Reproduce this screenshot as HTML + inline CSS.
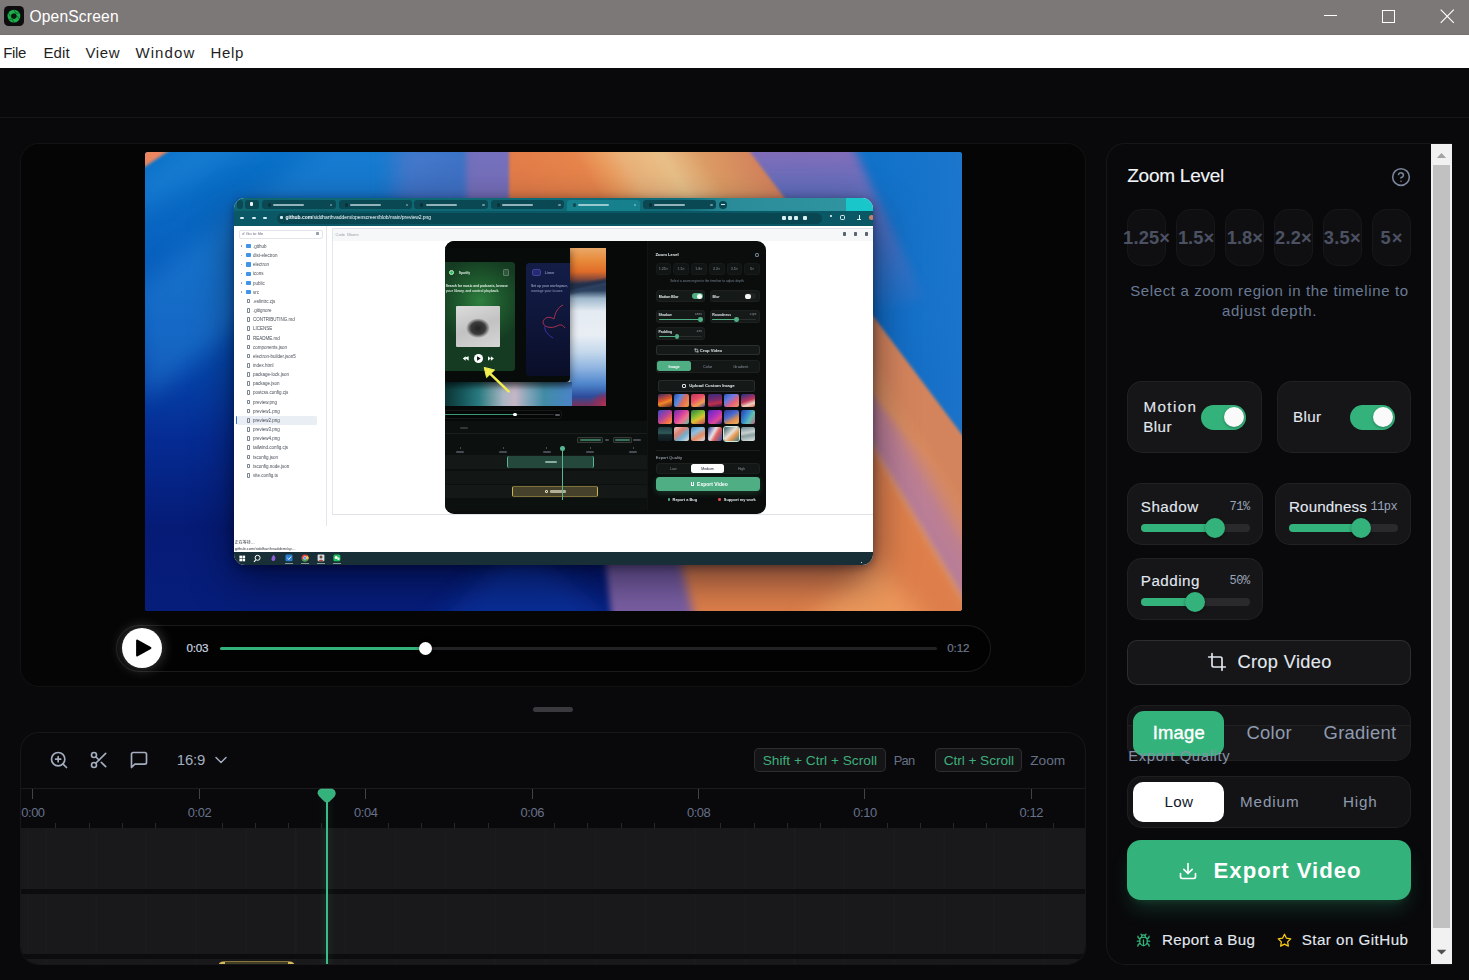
<!DOCTYPE html>
<html lang="en"><head><meta charset="utf-8"><title>OpenScreen</title>
<style>
html,body{margin:0;padding:0}
body{width:1469px;height:980px;overflow:hidden;position:relative;background:#09090b;font-family:"Liberation Sans",sans-serif}
div,span.t,svg{position:absolute;box-sizing:border-box}
.t{white-space:pre;line-height:1}
svg{overflow:visible}
</style></head><body>
<!-- window chrome -->
<div style="left:0px;top:0px;width:1469px;height:35px;background:#7c7877;border-bottom:1px solid #747070"></div>
<svg style="left:4px;top:6px" width="20" height="20" viewBox="0 0 20 20"><rect width="20" height="20" rx="4.6" fill="#0d0d0f"/><circle cx="9.9" cy="10.1" r="4.55" fill="none" stroke="#1fae4c" stroke-width="3.7"/><g stroke="#0f6a2c" stroke-width="0.9"><path d="M9.9 3.8l2 3.6M15.4 7l-4.1.1M15.4 13.3l-2.2-3.5M9.9 16.4l-2-3.6M4.4 13.3l4.1-.1M4.4 7l2.2 3.5"/></g><path d="M9.9 7.5l2.25 1.3v2.6l-2.25 1.3l-2.25-1.3v-2.6z" fill="#0a1c10"/></svg>
<span class="t" style="left:29.4px;top:9.3px;font-size:15.6px;color:#ffffff;letter-spacing:0.18px;">OpenScreen</span>
<div style="left:1324px;top:15px;width:12.5px;height:1px;background:#fff"></div>
<div style="left:1382px;top:10px;width:13px;height:12.5px;border:1px solid #fff"></div>
<svg style="left:1438px;top:7px" width="18" height="18" viewBox="0 0 18 18"><path d="M2.7 2.7L15.8 15.8M15.8 2.7L2.7 15.8" stroke="#fff" stroke-width="1.15" fill="none"/></svg>
<div style="left:0px;top:35px;width:1469px;height:33px;background:#ffffff"></div>
<span class="t" style="left:3.3px;top:45.4px;font-size:15px;color:#1f1f1f;letter-spacing:-0.36px;">File</span>
<span class="t" style="left:43.4px;top:45.4px;font-size:15px;color:#1f1f1f;letter-spacing:0.11px;">Edit</span>
<span class="t" style="left:85.5px;top:45.4px;font-size:15px;color:#1f1f1f;letter-spacing:0.58px;">View</span>
<span class="t" style="left:135.4px;top:45.4px;font-size:15px;color:#1f1f1f;letter-spacing:1.11px;">Window</span>
<span class="t" style="left:210.6px;top:45.4px;font-size:15px;color:#1f1f1f;letter-spacing:0.65px;">Help</span>
<div style="left:0px;top:68px;width:1469px;height:49px;background:#09090b"></div>
<div style="left:0px;top:117px;width:1469px;height:1px;background:rgba(255,255,255,.055)"></div>
<!-- preview panel -->
<div style="left:20px;top:143px;width:1066px;height:544px;background:#050506;border:1px solid rgba(255,255,255,.055);border-radius:19px"></div>
<!-- video preview frame -->
<div style="left:145px;top:152px;width:817px;height:458.7px;border-radius:3px;overflow:hidden;background:#0650b4">
<svg style="left:0;top:0" width="817" height="459" viewBox="0 0 817 459"><defs><linearGradient id="wb" x1="0" y1="0" x2="0" y2="1"><stop offset="0" stop-color="#0a72c8"/><stop offset=".18" stop-color="#0864c0"/><stop offset=".4" stop-color="#0650b4"/><stop offset=".62" stop-color="#052c94"/><stop offset=".82" stop-color="#051b76"/><stop offset="1" stop-color="#061d7a"/></linearGradient><linearGradient id="wr" x1="0" y1="0" x2="1" y2="0"><stop offset=".55" stop-color="#0a74cc" stop-opacity="0"/><stop offset=".8" stop-color="#0a6ec6" stop-opacity=".75"/><stop offset="1" stop-color="#1c76cc" stop-opacity=".95"/></linearGradient><linearGradient id="wo" gradientUnits="userSpaceOnUse" x1="364" y1="0" x2="538.1" y2="-107.9"><stop offset="0" stop-color="#e27c48"/><stop offset=".265" stop-color="#e6844c"/><stop offset=".36" stop-color="#ea9a5c"/><stop offset=".456" stop-color="#e9b078"/><stop offset=".63" stop-color="#e8c088"/><stop offset=".797" stop-color="#dc9a64"/><stop offset="1" stop-color="#d4845c"/></linearGradient><linearGradient id="wp" x1="0" y1="0" x2="0" y2="1"><stop offset="0" stop-color="#7470bc"/><stop offset="1" stop-color="#7a5ea2"/></linearGradient><linearGradient id="wv" x1="0" y1="0" x2="0" y2="1"><stop offset="0" stop-color="#8a6cb6" stop-opacity="1"/><stop offset="1" stop-color="#7a70c0" stop-opacity="0"/></linearGradient><linearGradient id="wk" gradientUnits="userSpaceOnUse" x1="728" y1="293" x2="768" y2="269.4"><stop offset="0" stop-color="#b47a9c" stop-opacity=".97"/><stop offset=".5" stop-color="#ba7d96" stop-opacity=".9"/><stop offset="1" stop-color="#d08070" stop-opacity="0"/></linearGradient><filter id="b2" x="-20%" y="-20%" width="140%" height="140%"><feGaussianBlur stdDeviation="1.6"/></filter><filter id="b3" x="-20%" y="-20%" width="140%" height="140%"><feGaussianBlur stdDeviation="3"/></filter><filter id="b5" x="-20%" y="-20%" width="140%" height="140%"><feGaussianBlur stdDeviation="5"/></filter><filter id="b10" x="-30%" y="-30%" width="160%" height="160%"><feGaussianBlur stdDeviation="11"/></filter></defs><rect width="817" height="459" fill="url(#wb)"/><rect width="817" height="300" fill="url(#wr)"/><polygon points="185,-12 325,-12 0,248 -10,138" fill="#2d8fe0" opacity=".38" filter="url(#b10)"/><polygon points="55,-12 115,-12 -10,63 -10,28" fill="#2f93e4" opacity=".35" filter="url(#b10)"/><polygon points="275,488 375,388 495,488" fill="#0a3cb0" opacity=".5" filter="url(#b10)"/><polygon points="250,-12 335,-12 335,58 415,248 355,248 250,58" fill="#6c74c4" opacity=".55" filter="url(#b10)"/><polygon points="321,-12 385,-12 385,53 430,178 505,298 571,413 583,470 467,470 461,413 430,298 375,178 321,53" fill="url(#wp)" filter="url(#b3)"/><polygon points="555,-12 705,-12 780,148 685,165" fill="url(#wv)" filter="url(#b5)"/><polygon points="364,-12 596,-12 830,300 830,470 579,470 571,413 503,298 420,178 364,53" fill="url(#wo)" filter="url(#b2)"/><polygon points="615,100 728,293 830,465 830,488 555,488 495,248" fill="#de7f4c" filter="url(#b5)"/><polygon points="645,488 728,404 795,488" fill="#f6a868" opacity=".6" filter="url(#b10)"/><polygon points="615,100 728,244 830,364 830,465 728,293" fill="url(#wk)" filter="url(#b3)"/><polygon points="-5,-6 31,-6 -5,18" fill="#ea8660" filter="url(#b2)"/></svg>
<div style="left:89px;top:46px;width:639px;height:367px;border-radius:11px;box-shadow:0 14px 40px rgba(0,0,20,.55),0 2px 10px rgba(0,0,20,.4)"></div>
<div style="left:89px;top:46px;width:639px;height:367px;border-radius:11px;overflow:hidden;background:#ffffff"><div style="left:0;top:0;width:639px;height:367px;filter:blur(.3px)">
<div style="left:0px;top:0px;width:639px;height:13px;background:linear-gradient(90deg,#0e6671 0%,#0f6c78 70%,#2a8c98 78%,#2f94a0 95%)"></div>
<div style="left:611.8px;top:0px;width:28px;height:13px;background:#19c6ca"></div>
<div style="left:2.5px;top:2.2px;width:6px;height:8.6px;background:#0a4853;border-radius:3px"></div>
<div style="left:10.5px;top:2.2px;width:14px;height:8.6px;background:#0a4853;border-radius:3px"></div>
<div style="left:16px;top:4px;width:3px;height:4px;background:#e8f4f6;border-radius:1px"></div>
<div style="left:27.5px;top:2.2px;width:74.1px;height:9.2px;background:#0a4954;border-radius:3.2px"></div>
<div style="left:33.5px;top:5.4px;width:3.2px;height:3.2px;background:#0c3038;border-radius:50%"></div>
<div style="left:39px;top:6px;width:31.12px;height:2px;background:rgba(230,245,248,.62);border-radius:1px"></div>
<div style="left:95.6px;top:5.6px;width:2.6px;height:2.6px;background:rgba(230,245,248,.45);border-radius:1px"></div>
<div style="left:104.6px;top:2.2px;width:73px;height:9.2px;background:#0a4954;border-radius:3.2px"></div>
<div style="left:110.6px;top:5.4px;width:3.2px;height:3.2px;background:#0c3038;border-radius:50%"></div>
<div style="left:116.1px;top:6px;width:30.66px;height:2px;background:rgba(230,245,248,.62);border-radius:1px"></div>
<div style="left:171.6px;top:5.6px;width:2.6px;height:2.6px;background:rgba(230,245,248,.45);border-radius:1px"></div>
<div style="left:180.3px;top:2.2px;width:74.1px;height:9.2px;background:#0a4954;border-radius:3.2px"></div>
<div style="left:186.3px;top:5.4px;width:3.2px;height:3.2px;background:#0c3038;border-radius:50%"></div>
<div style="left:191.8px;top:6px;width:31.12px;height:2px;background:rgba(230,245,248,.62);border-radius:1px"></div>
<div style="left:248.4px;top:5.6px;width:2.6px;height:2.6px;background:rgba(230,245,248,.45);border-radius:1px"></div>
<div style="left:256.6px;top:2.2px;width:73.4px;height:9.2px;background:#0a4954;border-radius:3.2px"></div>
<div style="left:262.6px;top:5.4px;width:3.2px;height:3.2px;background:#0c3038;border-radius:50%"></div>
<div style="left:268.1px;top:6px;width:30.83px;height:2px;background:rgba(230,245,248,.62);border-radius:1px"></div>
<div style="left:324px;top:5.6px;width:2.6px;height:2.6px;background:rgba(230,245,248,.45);border-radius:1px"></div>
<div style="left:332.7px;top:2.2px;width:73.1px;height:10.8px;background:#16808d;border-radius:3.2px 3.2px 0 0"></div>
<div style="left:338.7px;top:5.4px;width:3.2px;height:3.2px;background:#0d4c56;border-radius:50%"></div>
<div style="left:344.2px;top:6px;width:30.7px;height:2px;background:rgba(230,245,248,.62);border-radius:1px"></div>
<div style="left:399.8px;top:5.6px;width:2.6px;height:2.6px;background:rgba(230,245,248,.45);border-radius:1px"></div>
<div style="left:408.7px;top:2.2px;width:73.5px;height:9.2px;background:#0a4954;border-radius:3.2px"></div>
<div style="left:414.7px;top:5.4px;width:3.2px;height:3.2px;background:#0c3038;border-radius:50%"></div>
<div style="left:420.2px;top:6px;width:30.87px;height:2px;background:rgba(230,245,248,.62);border-radius:1px"></div>
<div style="left:476.2px;top:5.6px;width:2.6px;height:2.6px;background:rgba(230,245,248,.45);border-radius:1px"></div>
<div style="left:485.3px;top:2.6px;width:8px;height:8px;background:#0a4853;border-radius:50%"></div>
<div style="left:487.4px;top:6.2px;width:3.8px;height:0.9px;background:#cfe8ec"></div>
<div style="left:0px;top:13px;width:639px;height:15px;background:#0a5866"></div>
<div style="left:43px;top:14.6px;width:545px;height:11.4px;background:#084652;border-radius:5.7px"></div>
<div style="left:6px;top:18.8px;width:4px;height:2.2px;background:#d6eef2;border-radius:1px"></div>
<div style="left:17.5px;top:18.8px;width:4px;height:2.2px;background:#d6eef2;border-radius:1px"></div>
<div style="left:28.5px;top:18.8px;width:4px;height:2.2px;background:#d6eef2;border-radius:1px"></div>
<div style="left:46px;top:18px;width:3.4px;height:3.4px;background:#cfe8ec;border-radius:1px"></div>
<span class="t" style="left:51.6px;top:17.2px;font-size:5px;color:#f4fbfc;letter-spacing:-.05px"><b>github.com</b>/siddharthvaddem/openscreen/blob/main/preview2.png</span>
<div style="left:547.5px;top:18px;width:4px;height:3.6px;background:#d8eff2;border-radius:1px"></div>
<div style="left:553.5px;top:18px;width:4px;height:3.6px;background:#d8eff2;border-radius:1px"></div>
<div style="left:560px;top:18px;width:4px;height:3.6px;background:#d8eff2;border-radius:1px"></div>
<div style="left:568.5px;top:18px;width:4px;height:3.6px;background:#d8eff2;border-radius:1px"></div>
<div style="left:595.6px;top:17.2px;width:2.2px;height:2.2px;background:#fff;border-radius:50%"></div>
<div style="left:606px;top:17px;width:5px;height:5px;border:1px solid #e4f4f6;border-radius:1.4px"></div>
<div style="left:623px;top:17px;width:4.4px;height:5px;border-bottom:1.2px solid #e4f4f6;background:linear-gradient(#e4f4f6,#e4f4f6) center/1.2px 100% no-repeat"></div>
<div style="left:634.5px;top:16.6px;width:5px;height:5px;background:#c9826a;border-radius:50%"></div>
<div style="left:0px;top:28px;width:90px;height:326px;background:#fff"></div>
<div style="left:92px;top:28px;width:0.9px;height:300px;background:#e4e6ea"></div>
<div style="left:5px;top:31.5px;width:84px;height:9.4px;border:.8px solid #e2e5e9;border-radius:2px"></div>
<span class="t" style="left:7.5px;top:34.0px;font-size:4.4px;color:#6b7280">&#9740; Go to file</span>
<div style="left:82.3px;top:34.4px;width:2.4px;height:3px;background:#9aa1ab;border-radius:.6px"></div>
<div style="left:6.6px;top:47.4px;width:1.6px;height:1.6px;background:#8a919b;border-radius:50%"></div>
<div style="left:12px;top:46px;width:4.9px;height:4.2px;background:#3f94e6;border-radius:.8px"></div>
<span class="t" style="left:19.0px;top:46.8px;font-size:4.5px;color:#454c55">.github</span>
<div style="left:6.6px;top:56.56px;width:1.6px;height:1.6px;background:#8a919b;border-radius:50%"></div>
<div style="left:12px;top:55.16px;width:4.9px;height:4.2px;background:#3f94e6;border-radius:.8px"></div>
<span class="t" style="left:19.0px;top:56.0px;font-size:4.5px;color:#454c55">dist-electron</span>
<div style="left:6.6px;top:65.73px;width:1.6px;height:1.6px;background:#8a919b;border-radius:50%"></div>
<div style="left:12px;top:64.33px;width:4.9px;height:4.2px;background:#3f94e6;border-radius:.8px"></div>
<span class="t" style="left:19.0px;top:65.1px;font-size:4.5px;color:#454c55">electron</span>
<div style="left:6.6px;top:74.9px;width:1.6px;height:1.6px;background:#8a919b;border-radius:50%"></div>
<div style="left:12px;top:73.5px;width:4.9px;height:4.2px;background:#3f94e6;border-radius:.8px"></div>
<span class="t" style="left:19.0px;top:74.3px;font-size:4.5px;color:#454c55">icons</span>
<div style="left:6.6px;top:84.06px;width:1.6px;height:1.6px;background:#8a919b;border-radius:50%"></div>
<div style="left:12px;top:82.66px;width:4.9px;height:4.2px;background:#3f94e6;border-radius:.8px"></div>
<span class="t" style="left:19.0px;top:83.5px;font-size:4.5px;color:#454c55">public</span>
<div style="left:6.6px;top:93.23px;width:1.6px;height:1.6px;background:#8a919b;border-radius:50%"></div>
<div style="left:12px;top:91.83px;width:4.9px;height:4.2px;background:#3f94e6;border-radius:.8px"></div>
<span class="t" style="left:19.0px;top:92.6px;font-size:4.5px;color:#454c55">src</span>
<div style="left:13px;top:100.69px;width:3.4px;height:4.8px;border:.8px solid #7d8590;border-radius:.8px"></div>
<span class="t" style="left:19.0px;top:101.8px;font-size:4.5px;color:#454c55">.eslintrc.cjs</span>
<div style="left:13px;top:109.86px;width:3.4px;height:4.8px;border:.8px solid #7d8590;border-radius:.8px"></div>
<span class="t" style="left:19.0px;top:111.0px;font-size:4.5px;color:#454c55">.gitignore</span>
<div style="left:13px;top:119.02px;width:3.4px;height:4.8px;border:.8px solid #7d8590;border-radius:.8px"></div>
<span class="t" style="left:19.0px;top:120.1px;font-size:4.5px;color:#454c55">CONTRIBUTING.md</span>
<div style="left:13px;top:128.19px;width:3.4px;height:4.8px;border:.8px solid #7d8590;border-radius:.8px"></div>
<span class="t" style="left:19.0px;top:129.3px;font-size:4.5px;color:#454c55">LICENSE</span>
<div style="left:13px;top:137.35px;width:3.4px;height:4.8px;border:.8px solid #7d8590;border-radius:.8px"></div>
<span class="t" style="left:19.0px;top:138.5px;font-size:4.5px;color:#454c55">README.md</span>
<div style="left:13px;top:146.52px;width:3.4px;height:4.8px;border:.8px solid #7d8590;border-radius:.8px"></div>
<span class="t" style="left:19.0px;top:147.6px;font-size:4.5px;color:#454c55">components.json</span>
<div style="left:13px;top:155.68px;width:3.4px;height:4.8px;border:.8px solid #7d8590;border-radius:.8px"></div>
<span class="t" style="left:19.0px;top:156.8px;font-size:4.5px;color:#454c55">electron-builder.json5</span>
<div style="left:13px;top:164.85px;width:3.4px;height:4.8px;border:.8px solid #7d8590;border-radius:.8px"></div>
<span class="t" style="left:19.0px;top:165.9px;font-size:4.5px;color:#454c55">index.html</span>
<div style="left:13px;top:174.01px;width:3.4px;height:4.8px;border:.8px solid #7d8590;border-radius:.8px"></div>
<span class="t" style="left:19.0px;top:175.1px;font-size:4.5px;color:#454c55">package-lock.json</span>
<div style="left:13px;top:183.18px;width:3.4px;height:4.8px;border:.8px solid #7d8590;border-radius:.8px"></div>
<span class="t" style="left:19.0px;top:184.3px;font-size:4.5px;color:#454c55">package.json</span>
<div style="left:13px;top:192.34px;width:3.4px;height:4.8px;border:.8px solid #7d8590;border-radius:.8px"></div>
<span class="t" style="left:19.0px;top:193.4px;font-size:4.5px;color:#454c55">postcss.config.cjs</span>
<div style="left:13px;top:201.51px;width:3.4px;height:4.8px;border:.8px solid #7d8590;border-radius:.8px"></div>
<span class="t" style="left:19.0px;top:202.6px;font-size:4.5px;color:#454c55">preview.png</span>
<div style="left:13px;top:210.67px;width:3.4px;height:4.8px;border:.8px solid #7d8590;border-radius:.8px"></div>
<span class="t" style="left:19.0px;top:211.8px;font-size:4.5px;color:#454c55">preview1.png</span>
<div style="left:3.2px;top:218.04px;width:80px;height:8.8px;background:#e9eef5;border-radius:1.5px"></div>
<div style="left:1.6px;top:218.44px;width:1.1px;height:8px;background:#2f6fd6;border-radius:1px"></div>
<div style="left:13px;top:219.84px;width:3.4px;height:4.8px;border:.8px solid #7d8590;border-radius:.8px"></div>
<span class="t" style="left:19.0px;top:220.9px;font-size:4.5px;color:#454c55">preview2.png</span>
<div style="left:13px;top:229px;width:3.4px;height:4.8px;border:.8px solid #7d8590;border-radius:.8px"></div>
<span class="t" style="left:19.0px;top:230.1px;font-size:4.5px;color:#454c55">preview3.png</span>
<div style="left:13px;top:238.17px;width:3.4px;height:4.8px;border:.8px solid #7d8590;border-radius:.8px"></div>
<span class="t" style="left:19.0px;top:239.3px;font-size:4.5px;color:#454c55">preview4.png</span>
<div style="left:13px;top:247.33px;width:3.4px;height:4.8px;border:.8px solid #7d8590;border-radius:.8px"></div>
<span class="t" style="left:19.0px;top:248.4px;font-size:4.5px;color:#454c55">tailwind.config.cjs</span>
<div style="left:13px;top:256.5px;width:3.4px;height:4.8px;border:.8px solid #7d8590;border-radius:.8px"></div>
<span class="t" style="left:19.0px;top:257.6px;font-size:4.5px;color:#454c55">tsconfig.json</span>
<div style="left:13px;top:265.66px;width:3.4px;height:4.8px;border:.8px solid #7d8590;border-radius:.8px"></div>
<span class="t" style="left:19.0px;top:266.8px;font-size:4.5px;color:#454c55">tsconfig.node.json</span>
<div style="left:13px;top:274.83px;width:3.4px;height:4.8px;border:.8px solid #7d8590;border-radius:.8px"></div>
<span class="t" style="left:19.0px;top:275.9px;font-size:4.5px;color:#454c55">vite.config.ts</span>
<div style="left:97.5px;top:28px;width:541.5px;height:326px;background:#fff"></div>
<div style="left:97.5px;top:30.4px;width:541.5px;height:12.6px;background:#f6f7f8;border-top:.8px solid #e3e6e9;border-left:.8px solid #e3e6e9"></div>
<div style="left:97.5px;top:43px;width:0.8px;height:274px;background:#e3e6e9"></div>
<div style="left:97.5px;top:315.7px;width:541.5px;height:0.9px;background:#dfe2e6"></div>
<span class="t" style="left:101.5px;top:34.8px;font-size:4px;color:#9aa1ab">Code  Blame</span>
<div style="left:608.5px;top:34.2px;width:3.6px;height:3.8px;background:#5b636e;border-radius:.8px"></div>
<div style="left:619.5px;top:34.2px;width:3.6px;height:3.8px;background:#5b636e;border-radius:.8px"></div>
<div style="left:630.5px;top:34.2px;width:3.6px;height:3.8px;background:#5b636e;border-radius:.8px"></div>
<span class="t" style="left:0.8px;top:343.0px;font-size:4px;color:#30363d;font-family:&quot;Liberation Sans&quot;,&quot;Noto Sans CJK SC&quot;,sans-serif">正在等待…</span>
<span class="t" style="left:0.8px;top:348.6px;font-size:4px;color:#30363d">github.com/siddharthvaddem/op…</span>
<div style="left:0px;top:354.2px;width:639px;height:13px;background:#182f37"></div>
<svg style="left:0.0px;top:354.2px" width="110" height="13" viewBox="0 0 110 13"><g fill="#fff"><rect x="5.4" y="3.6" width="2.6" height="2.6"/><rect x="8.5" y="3.6" width="2.6" height="2.6"/><rect x="5.4" y="6.7" width="2.6" height="2.6"/><rect x="8.5" y="6.7" width="2.6" height="2.6"/></g><circle cx="23.6" cy="5.8" r="2.5" fill="none" stroke="#fff" stroke-width="1"/><path d="M21.8 7.8L20 9.8" stroke="#fff" stroke-width="1.1"/><path d="M39.4 2.8c2 1.4 2.4 3.4 1.6 5.2c-.8 1.4-2.8 1.4-3.4 0c-.6-1.6.6-3 1.8-5.200z" fill="#8d62d9"/><rect x="51.500" y="2.600" width="7" height="6.600" rx="1.200" fill="#2b7fd3"/><path d="M53.400 6l1.400 1.400l2.400-2.800" stroke="#fff" stroke-width=".9" fill="none"/><circle cx="71" cy="5.900" r="3.500" fill="#e2483d"/><path d="M71 5.900L67.800 7.700A3.500 3.500 0 0 0 74 7.800Z" fill="#3aa757"/><path d="M71 5.900l3 1.900a3.500 3.500 0 0 0-.4-4.400z" fill="#f6c330"/><circle cx="71" cy="5.900" r="1.500" fill="#4a8af4" stroke="#fff" stroke-width=".5"/><rect x="83.600" y="2.500" width="6.800" height="6.800" rx="1" fill="#d9dde3"/><circle cx="87" cy="5" r="1.500" fill="#6b4a3a"/><path d="M84.400 9.300c.4-2.200 4.800-2.200 5.200 0z" fill="#b5473c"/><rect x="99.400" y="2.500" width="7" height="6.800" rx="1.500" fill="#1fc15f"/><circle cx="102.200" cy="5.400" r="1.500" fill="#fff"/><circle cx="104.400" cy="6.800" r="1.200" fill="#eafff1"/><g fill="#9fb4b9"><rect x="51" y="11" width="8" height=".8"/><rect x="67" y="11" width="8" height=".8"/><rect x="83" y="11" width="8" height=".8"/><rect x="99" y="11" width="8" height=".8"/></g></svg>
<div style="left:626.5px;top:363.5px;width:1.6px;height:1.6px;background:#dfe9ea"></div>
<!-- nested app screenshot -->
<div style="left:211.20px;top:42.80px;width:320.6px;height:273.6px;border-radius:9px;background:#0a0d0c;overflow:hidden">
<div style="left:0.03px;top:0.02px;width:201.8px;height:180.28px;background:#070909"></div>
<div style="left:0px;top:7.5px;width:161px;height:157.9px;background:#dfe6ee"></div>
<div style="left:125px;top:7.5px;width:36px;height:157.9px;background:linear-gradient(180deg,#eaa868 0%,#e88a3a 8%,#e06c28 15%,#8a4a3a 19.5%,#22304c 23%,#2c4260 27%,#9fb8cc 32%,#e4ebf2 40%,#e9eef4 55%,#c4d8ec 66%,#8fb4e0 76%,#4f86cc 86%,#2c4c9c 94%,#7a3058 100%)"></div>
<div style="left:125px;top:35.2px;width:36px;height:20px;background:linear-gradient(168deg,rgba(34,48,76,0) 30%,#22304c 46%,#2c4260 56%,rgba(44,66,96,0) 72%)"></div>
<div style="left:0px;top:141.2px;width:126.8px;height:24.2px;background:linear-gradient(90deg,#0d3434 0%,#16585c 14%,#2a7c82 27%,#a9b6c2 46%,#c6b6c6 55%,#7fa4b8 66%,#428ca6 78%,#4a84c8 100%)"></div>
<div style="left:144.8px;top:151.2px;width:16.2px;height:14.2px;background:radial-gradient(ellipse at 100% 100%,#b03450 0%,#8a305c 40%,rgba(44,76,156,0) 75%)"></div>
<div style="left:0px;top:141.2px;width:126.8px;height:8px;background:linear-gradient(180deg,rgba(0,0,0,.35),rgba(0,0,0,0))"></div>
<div style="left:0px;top:7.5px;width:125.2px;height:134px;background:#070b09;border-radius:0 0 4px 0;box-shadow:0 2px 8px rgba(0,0,0,.55)"></div>
<div style="left:0px;top:21.2px;width:70.1px;height:109.3px;background:radial-gradient(ellipse 62% 40% at 50% 36%,#2f8040 0%,#1f5c2e 45%,#153c22 100%);border-radius:0 3.5px 3.5px 0"></div>
<div style="left:3.6px;top:28.9px;width:5.6px;height:5.6px;background:#2fbf5a;border-radius:50%;border:.6px solid #bff0cb"></div>
<div style="left:57.6px;top:28.6px;width:6.6px;height:6.6px;background:rgba(255,255,255,.10);border:.5px solid rgba(255,255,255,.22);border-radius:1.500px"></div>
<div style="left:11.3px;top:64.9px;width:43.2px;height:41.7px;background:radial-gradient(ellipse 27% 24% at 50% 54%,#222 0%,#3c3c3c 62%,rgba(90,90,90,0) 100%),linear-gradient(160deg,#dcdcdc,#c2c2c2 50%,#d6d6d6);border-radius:1px"></div>
<div style="left:28.6px;top:113.3px;width:8.8px;height:8.8px;background:#fff;border-radius:50%"></div>
<div style="left:31.5px;top:115.5px;width:4px;height:4.4px;background:#0b120f;clip-path:polygon(10% 0,100% 50%,10% 100%)"></div>
<div style="left:17.5px;top:115.5px;width:6px;height:4.4px;background:#f3fff6;clip-path:polygon(0 50%,50% 0,50% 100%,0 50%,100% 0,100% 100%,50% 50%)"></div>
<div style="left:42.7px;top:115.5px;width:6px;height:4.4px;background:#f3fff6;clip-path:polygon(0 0,50% 50%,50% 0,100% 50%,50% 100%,50% 50%,0 100%)"></div>
<div style="left:81.1px;top:22.2px;width:44.1px;height:113px;background:linear-gradient(180deg,#131d46 0%,#0f173c 45%,#0a0e28 100%);border-radius:3.500px 0 0 3.500px"></div>
<div style="left:86.6px;top:28px;width:9.2px;height:7.6px;background:#262a70;border-radius:2px;border:.5px solid #3f449a"></div>
<svg style="left:87.8px;top:61.2px" width="36" height="44" viewBox="0 0 36 44" fill="none"><path d="M30 3c-5 2-8 8-9 14c-4-3-10-2-11 3c0 5 8 7 14 4c4-2 6-1 8 2" stroke="#b8344e" stroke-width="1" opacity=".9"/><path d="M12 24c-1 5 3 9 8 12" stroke="#3a30b0" stroke-width="1"/></svg>
<svg style="left:35.4px;top:123.0px" width="34" height="34" viewBox="0 0 34 34"><path d="M27.600 27.400L8 8.600" stroke="#f2ee52" stroke-width="2.500" stroke-linecap="round"/><path d="M3.200 3.400L13.600 6L5.600 13.600Z" fill="#f2ee52" stroke="#f2ee52" stroke-width="1" stroke-linejoin="round"/></svg>
<div style="left:0.03px;top:169.54px;width:116.89px;height:8.43px;background:#050706;border-radius:0 4px 4px 0;border:.5px solid rgba(255,255,255,.07)"></div>
<div style="left:0.03px;top:173.18px;width:108.75px;height:1.16px;background:#2a2f2d"></div>
<div style="left:0.03px;top:173.18px;width:69.5px;height:1.16px;background:#3f9a72"></div>
<div style="left:67.79px;top:171.87px;width:3.78px;height:3.78px;background:#fff;border-radius:50%"></div>
<div style="left:109.95px;top:172.74px;width:4.65px;height:2.04px;background:rgba(160,170,180,.5);border-radius:1px"></div>
<div style="left:0.03px;top:180.3px;width:201.8px;height:88.69px;background:#0c100f"></div>
<div style="left:0.03px;top:192.51px;width:201.8px;height:0.58px;background:rgba(255,255,255,.06)"></div>
<div style="left:15.15px;top:186.12px;width:8.14px;height:2.04px;background:rgba(140,150,160,.3);border-radius:1px"></div>
<div style="left:132.05px;top:196.29px;width:26.17px;height:6.4px;background:#161b19;border:.5px solid rgba(255,255,255,.14);border-radius:1.500px"></div>
<div style="left:134.38px;top:198.62px;width:21.81px;height:1.74px;background:rgba(79,174,132,.6);border-radius:1px"></div>
<div style="left:159.38px;top:198.62px;width:4.65px;height:1.74px;background:rgba(140,150,160,.45);border-radius:1px"></div>
<div style="left:168.11px;top:196.29px;width:18.61px;height:6.4px;background:#161b19;border:.5px solid rgba(255,255,255,.14);border-radius:1.500px"></div>
<div style="left:170.14px;top:198.62px;width:14.54px;height:1.74px;background:rgba(79,174,132,.6);border-radius:1px"></div>
<div style="left:188.17px;top:198.62px;width:7.85px;height:1.74px;background:rgba(140,150,160,.45);border-radius:1px"></div>
<div style="left:14.92px;top:205.89px;width:0.47px;height:2.33px;background:rgba(255,255,255,.25)"></div>
<div style="left:11.08px;top:209.96px;width:8.14px;height:2.04px;background:rgba(150,160,175,.42);border-radius:1px"></div>
<div style="left:57.96px;top:205.89px;width:0.47px;height:2.33px;background:rgba(255,255,255,.25)"></div>
<div style="left:54.12px;top:209.96px;width:8.14px;height:2.04px;background:rgba(150,160,175,.42);border-radius:1px"></div>
<div style="left:101.28px;top:205.89px;width:0.47px;height:2.33px;background:rgba(255,255,255,.25)"></div>
<div style="left:97.45px;top:209.96px;width:8.14px;height:2.04px;background:rgba(150,160,175,.42);border-radius:1px"></div>
<div style="left:144.32px;top:205.89px;width:0.47px;height:2.33px;background:rgba(255,255,255,.25)"></div>
<div style="left:140.48px;top:209.96px;width:8.14px;height:2.04px;background:rgba(150,160,175,.42);border-radius:1px"></div>
<div style="left:187.65px;top:205.89px;width:0.47px;height:2.33px;background:rgba(255,255,255,.25)"></div>
<div style="left:183.81px;top:209.96px;width:8.14px;height:2.04px;background:rgba(150,160,175,.42);border-radius:1px"></div>
<div style="left:0.03px;top:214.32px;width:201.8px;height:14.25px;background:#141918"></div>
<div style="left:0.03px;top:229.73px;width:201.8px;height:13.38px;background:#121615"></div>
<div style="left:0.03px;top:243.98px;width:201.8px;height:13.67px;background:#141918"></div>
<div style="left:62.26px;top:215.19px;width:86.07px;height:11.63px;background:#24493c;border-left:1.400px solid #58b792;border-right:1.400px solid #58b792;border-radius:2px"></div>
<div style="left:99.48px;top:219.85px;width:12.21px;height:2.33px;background:rgba(200,240,225,.6);border-radius:1px"></div>
<div style="left:66.91px;top:244.85px;width:86.36px;height:11.05px;background:#45412a;border-left:1.400px solid #cdb457;border-right:1.400px solid #cdb457;border-radius:2px;border-top:.5px solid #7d7038;border-bottom:.5px solid #7d7038"></div>
<div style="left:99.48px;top:248.93px;width:3.49px;height:3.2px;border:.6px solid #e8e2c4;border-radius:1px"></div>
<div style="left:105.3px;top:249.51px;width:15.12px;height:2.33px;background:rgba(240,235,210,.65);border-radius:1px"></div>
<div style="left:116.78px;top:207.92px;width:1.45px;height:50.89px;background:#58b792"></div>
<div style="left:115.18px;top:205.31px;width:4.65px;height:4.65px;background:#58b792;border-radius:50% 50% 50% 50%"></div>
<div style="left:201.84px;top:0.02px;width:0.87px;height:268.97px;background:rgba(255,255,255,.03)"></div>
<div style="left:310.01px;top:12.23px;width:3.49px;height:3.78px;border:.6px solid #7d8aa0;border-radius:50%"></div>
<div style="left:210.56px;top:22.12px;width:15.7px;height:11.63px;background:#111514;border-radius:3.500px;border:.4px solid rgba(255,255,255,.025)"></div>
<div style="left:228.3px;top:22.12px;width:15.7px;height:11.63px;background:#111514;border-radius:3.500px;border:.4px solid rgba(255,255,255,.025)"></div>
<div style="left:246.04px;top:22.12px;width:15.7px;height:11.63px;background:#111514;border-radius:3.500px;border:.4px solid rgba(255,255,255,.025)"></div>
<div style="left:263.77px;top:22.12px;width:15.7px;height:11.63px;background:#111514;border-radius:3.500px;border:.4px solid rgba(255,255,255,.025)"></div>
<div style="left:281.51px;top:22.12px;width:15.7px;height:11.63px;background:#111514;border-radius:3.500px;border:.4px solid rgba(255,255,255,.025)"></div>
<div style="left:299.25px;top:22.12px;width:15.7px;height:11.63px;background:#111514;border-radius:3.500px;border:.4px solid rgba(255,255,255,.025)"></div>
<div style="left:210.56px;top:49.45px;width:49.43px;height:12.21px;background:#151a19;border:.4px solid rgba(255,255,255,.03);border-radius:3.500px"></div>
<div style="left:264.36px;top:49.45px;width:50.31px;height:12.21px;background:#151a19;border:.4px solid rgba(255,255,255,.03);border-radius:3.500px"></div>
<div style="left:246.62px;top:52.36px;width:11.05px;height:6.11px;background:#4fae84;border-radius:3.200px"></div>
<div style="left:251.85px;top:53.08px;width:5.23px;height:4.65px;background:#f4fff9;border-radius:50%"></div>
<div style="left:299.54px;top:52.36px;width:11.05px;height:6.11px;background:#1f2524;border-radius:3.200px"></div>
<div style="left:300.12px;top:53.08px;width:5.23px;height:4.65px;background:#f4f4f4;border-radius:50%"></div>
<div style="left:210.56px;top:68.93px;width:49.43px;height:13.38px;background:#151a19;border:.4px solid rgba(255,255,255,.03);border-radius:3.500px"></div>
<div style="left:213.47px;top:77.95px;width:43.04px;height:1.45px;background:#2b302f;border-radius:1px"></div>
<div style="left:213.47px;top:77.95px;width:41.74px;height:1.45px;background:#4fae84;border-radius:1px"></div>
<div style="left:252.89px;top:76.35px;width:4.65px;height:4.65px;background:#4fae84;border-radius:50%"></div>
<div style="left:264.36px;top:68.93px;width:50.31px;height:13.38px;background:#151a19;border:.4px solid rgba(255,255,255,.03);border-radius:3.500px"></div>
<div style="left:267.26px;top:77.95px;width:43.91px;height:1.45px;background:#2b302f;border-radius:1px"></div>
<div style="left:267.26px;top:77.95px;width:24.15px;height:1.45px;background:#4fae84;border-radius:1px"></div>
<div style="left:289.09px;top:76.35px;width:4.65px;height:4.65px;background:#4fae84;border-radius:50%"></div>
<div style="left:210.56px;top:86.09px;width:49.43px;height:13.38px;background:#151a19;border:.4px solid rgba(255,255,255,.03);border-radius:3.500px"></div>
<div style="left:213.47px;top:95.1px;width:43.04px;height:1.45px;background:#2b302f;border-radius:1px"></div>
<div style="left:213.47px;top:95.1px;width:18.51px;height:1.45px;background:#4fae84;border-radius:1px"></div>
<div style="left:229.65px;top:93.5px;width:4.65px;height:4.65px;background:#4fae84;border-radius:50%"></div>
<div style="left:210.56px;top:104.12px;width:104.1px;height:10.47px;background:#151a19;border:.4px solid rgba(255,255,255,.09);border-radius:2.500px"></div>
<svg style="left:248.40px;top:107.00px" width="5" height="5" viewBox="0 0 24 24" fill="none" stroke="#dfe6ea" stroke-width="3"><path d="M6 2v14a2 2 0 0 0 2 2h14"/><path d="M18 22V8a2 2 0 0 0-2-2H2"/></svg>
<div style="left:210.56px;top:119.24px;width:104.1px;height:12.5px;background:#131716;border:.4px solid rgba(255,255,255,.04);border-radius:3.500px"></div>
<div style="left:212.31px;top:120.69px;width:33.44px;height:9.89px;background:#4fae84;border-radius:2.500px"></div>
<div style="left:212.89px;top:139.59px;width:96.83px;height:11.34px;background:#151a19;border:.4px solid rgba(255,255,255,.08);border-radius:2.500px"></div>
<div style="left:237.31px;top:143.37px;width:3.49px;height:3.78px;border:.7px solid #dfe6ea;border-radius:1px"></div>
<span class="t" style="left:244.0px;top:142.8px;font-size:4.3px;color:#e4eaee;font-weight:700;">Upload Custom Image</span>
<div style="left:212.89px;top:153.55px;width:14.25px;height:13.09px;background:linear-gradient(160deg,#3a2a6a 0%,#d9562a 45%,#f08a2a 60%,#5a1f2a 100%);border-radius:2px"></div>
<div style="left:229.17px;top:153.55px;width:14.25px;height:13.09px;background:linear-gradient(120deg,#2a4fb0 0%,#5a8ae0 35%,#e06a5a 60%,#f0a040 100%);border-radius:2px"></div>
<div style="left:245.75px;top:153.55px;width:14.25px;height:13.09px;background:linear-gradient(150deg,#c0355a 0%,#e8506a 40%,#f0a050 70%,#4a3a9a 100%);border-radius:2px"></div>
<div style="left:262.32px;top:153.55px;width:14.25px;height:13.09px;background:linear-gradient(170deg,#3a2a7a 0%,#7a2a6a 45%,#c0304a 70%,#2a1a4a 100%);border-radius:2px"></div>
<div style="left:279.18px;top:153.55px;width:14.25px;height:13.09px;background:linear-gradient(140deg,#2a5ac0 0%,#6a7ae0 35%,#e8607a 65%,#f09a60 100%);border-radius:2px"></div>
<div style="left:295.76px;top:153.55px;width:14.25px;height:13.09px;background:linear-gradient(160deg,#1f2f8a 0%,#c0355a 50%,#f0d0c0 75%,#e07050 100%);border-radius:2px"></div>
<div style="left:212.89px;top:169.54px;width:14.25px;height:13.67px;background:linear-gradient(140deg,#3a4ac0 0%,#b040a0 45%,#f06a50 75%,#f0a040 100%);border-radius:2px"></div>
<div style="left:229.17px;top:169.54px;width:14.25px;height:13.67px;background:linear-gradient(135deg,#6a2ab0 0%,#d040a0 40%,#f07090 65%,#60c0a0 100%);border-radius:2px"></div>
<div style="left:245.75px;top:169.54px;width:14.25px;height:13.67px;background:linear-gradient(150deg,#2a7a4a 0%,#8ac030 40%,#e0c030 60%,#c04060 100%);border-radius:2px"></div>
<div style="left:262.32px;top:169.54px;width:14.25px;height:13.67px;background:linear-gradient(140deg,#5a2ac0 0%,#b030c0 45%,#e04a90 70%,#3a2a8a 100%);border-radius:2px"></div>
<div style="left:279.18px;top:169.54px;width:14.25px;height:13.67px;background:linear-gradient(150deg,#2a3a9a 0%,#4a6ad0 40%,#e09050 70%,#f0b060 100%);border-radius:2px"></div>
<div style="left:295.76px;top:169.54px;width:14.25px;height:13.67px;background:linear-gradient(120deg,#2a3ab0 0%,#3a8ad0 40%,#60c0b0 65%,#c06080 100%);border-radius:2px"></div>
<div style="left:212.89px;top:186.12px;width:14.25px;height:13.96px;background:linear-gradient(180deg,#1f3a40 0%,#2f5a5a 45%,#16282c 55%,#0f1c20 100%);border-radius:2px"></div>
<div style="left:229.17px;top:186.12px;width:14.25px;height:13.96px;background:linear-gradient(140deg,#e8d0d0 0%,#e08070 35%,#70b0d0 65%,#e8e0e0 100%);border-radius:2px"></div>
<div style="left:245.75px;top:186.12px;width:14.25px;height:13.96px;background:linear-gradient(150deg,#4a8ac0 0%,#90c0e0 35%,#e88a60 65%,#d0e0f0 100%);border-radius:2px"></div>
<div style="left:262.32px;top:186.12px;width:14.25px;height:13.96px;background:linear-gradient(120deg,#2a3a8a 0%,#e8e0e8 40%,#e0605a 60%,#3a5ab0 100%);border-radius:2px"></div>
<div style="left:279.18px;top:186.12px;width:14.25px;height:13.96px;background:linear-gradient(135deg,#2a5a6a 0%,#e8e0d8 45%,#e89a50 65%,#3a7a8a 100%);border-radius:2px;outline:.6px solid #cfe9dd"></div>
<div style="left:295.76px;top:186.12px;width:14.25px;height:13.96px;background:linear-gradient(170deg,#6a8a90 0%,#c8d0d0 40%,#8aa0a0 60%,#e0e4e4 100%);border-radius:2px"></div>
<div style="left:210.56px;top:209.09px;width:104.1px;height:0.44px;background:rgba(255,255,255,.07)"></div>
<span class="t" style="left:210.6px;top:215.5px;font-size:4.2px;color:#aeb8c2;">Export Quality</span>
<div style="left:210.56px;top:221.88px;width:104.1px;height:11.63px;background:#131716;border:.4px solid rgba(255,255,255,.04);border-radius:3.500px"></div>
<div style="left:245.75px;top:223.05px;width:33.44px;height:9.31px;background:#ffffff;border-radius:2.500px"></div>
<div style="left:210.56px;top:236.42px;width:104.1px;height:13.96px;background:#4fae84;border-radius:3.500px;box-shadow:0 2px 6px rgba(79,174,132,.25)"></div>
<div style="left:245.45px;top:241.36px;width:3.2px;height:3.49px;border:.7px solid #fff;border-top:none;border-radius:0 0 1px 1px"></div>
<span class="t" style="left:251.9px;top:240.8px;font-size:5px;color:#ffffff;font-weight:700;">Export Video</span>
<div style="left:222.48px;top:257.36px;width:2.62px;height:2.91px;background:#4fae84;border-radius:1px"></div>
<span class="t" style="left:227.4px;top:257.1px;font-size:3.9px;color:#e4eaee;font-weight:700;">Report a Bug</span>
<div style="left:272.79px;top:257.36px;width:3.2px;height:2.91px;background:#e5484d;border-radius:50% 50% 50% 50%"></div>
<span class="t" style="left:278.6px;top:257.1px;font-size:3.9px;color:#e4eaee;font-weight:700;">Support my work</span>
<svg style="left:0;top:0" width="320.6" height="273.6" viewBox="445.2 240.8 320.6 273.6" font-family="Liberation Sans, sans-serif"><text x="459.00" y="273.76" font-size="3.4" fill="rgba(240,255,245,.9)" font-weight="700">Spotify</text><text x="446.00" y="286.62" font-size="3.3" fill="rgba(245,255,248,.92)" font-weight="700">Search for music and podcasts, browse</text><text x="446.00" y="291.72" font-size="3.3" fill="rgba(245,255,248,.85)" font-weight="700">your library, and control playback.</text><text x="545.00" y="273.69" font-size="3.2" fill="rgba(210,215,255,.6)" font-weight="700">Linear</text><text x="531.30" y="286.62" font-size="3.3" fill="rgba(215,222,255,.62)" font-weight="700">Set up your workspace,</text><text x="531.30" y="291.72" font-size="3.3" fill="rgba(215,222,255,.5)" font-weight="700">manage your issues</text><text x="655.70" y="255.83" font-size="4.2" fill="#e8eef0" font-weight="700">Zoom Level</text><text x="663.61" y="270.13" font-size="3.7" fill="rgba(150,160,172,.62)" font-weight="700" text-anchor="middle">1.25×</text><text x="681.35" y="270.13" font-size="3.7" fill="rgba(150,160,172,.62)" font-weight="700" text-anchor="middle">1.5×</text><text x="699.09" y="270.13" font-size="3.7" fill="rgba(150,160,172,.62)" font-weight="700" text-anchor="middle">1.8×</text><text x="716.82" y="270.13" font-size="3.7" fill="rgba(150,160,172,.62)" font-weight="700" text-anchor="middle">2.2×</text><text x="734.56" y="270.13" font-size="3.7" fill="rgba(150,160,172,.62)" font-weight="700" text-anchor="middle">3.5×</text><text x="752.30" y="270.13" font-size="3.7" fill="rgba(150,160,172,.62)" font-weight="700" text-anchor="middle">5×</text><text x="707.50" y="281.50" font-size="3.25" fill="rgba(150,165,185,.75)" text-anchor="middle">Select a zoom region in the timeline to adjust depth.</text><text x="659.00" y="297.61" font-size="3.55" fill="#eef3f6" font-weight="700">Motion Blur</text><text x="712.80" y="297.61" font-size="3.55" fill="#dfe6ea" font-weight="700">Blur</text><text x="658.67" y="315.43" font-size="3.5" fill="#dfe6ea" font-weight="700">Shadow</text><text x="701.99" y="314.93" font-size="2.9" fill="rgba(170,180,195,.8)" font-family="Liberation Mono, monospace" text-anchor="end">100%</text><text x="712.46" y="315.43" font-size="3.5" fill="#dfe6ea" font-weight="700">Roundness</text><text x="756.66" y="314.93" font-size="2.9" fill="rgba(170,180,195,.8)" font-family="Liberation Mono, monospace" text-anchor="end">11px</text><text x="658.67" y="332.58" font-size="3.5" fill="#dfe6ea" font-weight="700">Padding</text><text x="701.99" y="332.09" font-size="2.9" fill="rgba(170,180,195,.8)" font-family="Liberation Mono, monospace" text-anchor="end">43%</text><text x="700.00" y="351.83" font-size="4.2" fill="#e4eaee" font-weight="700">Crop Video</text><text x="674.30" y="367.73" font-size="3.9" fill="#ffffff" font-weight="700" text-anchor="middle">Image</text><text x="707.90" y="367.73" font-size="3.9" fill="rgba(160,172,188,.8)" text-anchor="middle">Color</text><text x="741.00" y="367.73" font-size="3.9" fill="rgba(160,172,188,.8)" text-anchor="middle">Gradient</text><text x="673.50" y="469.40" font-size="3.5" fill="rgba(160,172,188,.8)" text-anchor="middle">Low</text><text x="707.67" y="469.40" font-size="3.5" fill="#0f172a" text-anchor="middle">Medium</text><text x="741.83" y="469.40" font-size="3.5" fill="rgba(160,172,188,.8)" text-anchor="middle">High</text></svg>
</div>
</div></div>
</div>
<!-- playback bar -->
<div style="left:116px;top:624.5px;width:875px;height:47.5px;background:#020203;border:1px solid rgba(255,255,255,.1);border-radius:24px"></div>
<div style="left:122px;top:628px;width:40px;height:40px;background:#fff;border-radius:50%;box-shadow:0 0 14px rgba(255,255,255,.28)"></div>
<svg style="left:130px;top:636px" width="24" height="24" viewBox="0 0 24 24"><path d="M7.2 4.6L20.3 12L7.2 19.4Z" fill="#000" stroke="#000" stroke-width="2.2" stroke-linejoin="round"/></svg>
<span class="t" style="left:186.4px;top:642.4px;font-size:11.6px;color:#cbd5e1;letter-spacing:-0.13px;-webkit-text-stroke:.2px #cbd5e1;">0:03</span>
<div style="left:219.5px;top:646.7px;width:717.5px;height:3.6px;background:#232326;border-radius:2px"></div>
<div style="left:219.5px;top:646.7px;width:206px;height:3.6px;background:#34b27b;border-radius:2px"></div>
<div style="left:418.7px;top:642px;width:13px;height:13px;background:#fff;border-radius:50%;box-shadow:0 0 4px rgba(0,0,0,.5)"></div>
<span class="t" style="left:947.2px;top:642.4px;font-size:11.6px;color:#6b7689;letter-spacing:-0.06px;-webkit-text-stroke:.2px #6b7689;">0:12</span>
<div style="left:533px;top:706.5px;width:40px;height:5px;background:#3a3a3e;border-radius:3px"></div>
<!-- timeline panel -->
<div style="left:20px;top:732px;width:1066px;height:233px;background:#09090b;border:1px solid rgba(255,255,255,.06);border-radius:19px;overflow:hidden">
<div style="left:0px;top:55px;width:1066px;height:1px;background:rgba(255,255,255,.08)"></div>
<div style="left:0px;top:56px;width:1066px;height:39px;background:#09090b"></div>
<div style="left:0px;top:95px;width:1066px;height:61px;background-color:#19191b;background-image:repeating-linear-gradient(90deg,rgba(255,255,255,.012) 0,rgba(255,255,255,.012) 1px,transparent 1px,transparent 49.9px);background-position:24.7px 0;"></div>
<div style="left:0px;top:156px;width:1066px;height:5px;background:#0c0c0e"></div>
<div style="left:0px;top:161px;width:1066px;height:60px;background-color:#19191b;background-image:repeating-linear-gradient(90deg,rgba(255,255,255,.012) 0,rgba(255,255,255,.012) 1px,transparent 1px,transparent 49.9px);background-position:24.7px 0;"></div>
<div style="left:0px;top:221px;width:1066px;height:5px;background:#0c0c0e"></div>
<div style="left:0px;top:226px;width:1066px;height:8px;background-color:#19191b;background-image:repeating-linear-gradient(90deg,rgba(255,255,255,.012) 0,rgba(255,255,255,.012) 1px,transparent 1px,transparent 49.9px);background-position:24.7px 0;"></div>
<div style="left:197.4px;top:228.2px;width:76.6px;height:14px;border-radius:6px;background:#423d25;border-top:1px solid #85753a;border-left:7px solid #d6ba5a;border-right:7px solid #d6ba5a"></div>
<div style="left:34px;top:90px;width:1px;height:5px;background:rgba(255,255,255,.13)"></div>
<div style="left:68px;top:90px;width:1px;height:5px;background:rgba(255,255,255,.13)"></div>
<div style="left:101px;top:90px;width:1px;height:5px;background:rgba(255,255,255,.13)"></div>
<div style="left:134px;top:90px;width:1px;height:5px;background:rgba(255,255,255,.13)"></div>
<div style="left:201px;top:90px;width:1px;height:5px;background:rgba(255,255,255,.13)"></div>
<div style="left:234px;top:90px;width:1px;height:5px;background:rgba(255,255,255,.13)"></div>
<div style="left:267px;top:90px;width:1px;height:5px;background:rgba(255,255,255,.13)"></div>
<div style="left:300px;top:90px;width:1px;height:5px;background:rgba(255,255,255,.13)"></div>
<div style="left:367px;top:90px;width:1px;height:5px;background:rgba(255,255,255,.13)"></div>
<div style="left:400px;top:90px;width:1px;height:5px;background:rgba(255,255,255,.13)"></div>
<div style="left:433px;top:90px;width:1px;height:5px;background:rgba(255,255,255,.13)"></div>
<div style="left:467px;top:90px;width:1px;height:5px;background:rgba(255,255,255,.13)"></div>
<div style="left:533px;top:90px;width:1px;height:5px;background:rgba(255,255,255,.13)"></div>
<div style="left:566px;top:90px;width:1px;height:5px;background:rgba(255,255,255,.13)"></div>
<div style="left:600px;top:90px;width:1px;height:5px;background:rgba(255,255,255,.13)"></div>
<div style="left:633px;top:90px;width:1px;height:5px;background:rgba(255,255,255,.13)"></div>
<div style="left:699px;top:90px;width:1px;height:5px;background:rgba(255,255,255,.13)"></div>
<div style="left:733px;top:90px;width:1px;height:5px;background:rgba(255,255,255,.13)"></div>
<div style="left:766px;top:90px;width:1px;height:5px;background:rgba(255,255,255,.13)"></div>
<div style="left:799px;top:90px;width:1px;height:5px;background:rgba(255,255,255,.13)"></div>
<div style="left:866px;top:90px;width:1px;height:5px;background:rgba(255,255,255,.13)"></div>
<div style="left:899px;top:90px;width:1px;height:5px;background:rgba(255,255,255,.13)"></div>
<div style="left:932px;top:90px;width:1px;height:5px;background:rgba(255,255,255,.13)"></div>
<div style="left:965px;top:90px;width:1px;height:5px;background:rgba(255,255,255,.13)"></div>
<div style="left:1032px;top:90px;width:1px;height:5px;background:rgba(255,255,255,.13)"></div>
<div style="left:11px;top:56px;width:1px;height:10px;background:rgba(255,255,255,.24)"></div>
<div style="left:178px;top:56px;width:1px;height:10px;background:rgba(255,255,255,.24)"></div>
<div style="left:344px;top:56px;width:1px;height:10px;background:rgba(255,255,255,.24)"></div>
<div style="left:511px;top:56px;width:1px;height:10px;background:rgba(255,255,255,.24)"></div>
<div style="left:677px;top:56px;width:1px;height:10px;background:rgba(255,255,255,.24)"></div>
<div style="left:843px;top:56px;width:1px;height:10px;background:rgba(255,255,255,.24)"></div>
<div style="left:1010px;top:56px;width:1px;height:10px;background:rgba(255,255,255,.24)"></div>
</div>
<span class="t" style="left:21.3px;top:807.0px;font-size:12.9px;color:#66708a;letter-spacing:-0.46px;">0:00</span>
<span class="t" style="left:187.8px;top:807.0px;font-size:12.9px;color:#68718a;letter-spacing:-0.40px;">0:02</span>
<span class="t" style="left:354.1px;top:807.0px;font-size:12.9px;color:#68718a;letter-spacing:-0.40px;">0:04</span>
<span class="t" style="left:520.5px;top:807.0px;font-size:12.9px;color:#68718a;letter-spacing:-0.40px;">0:06</span>
<span class="t" style="left:686.9px;top:807.0px;font-size:12.9px;color:#68718a;letter-spacing:-0.40px;">0:08</span>
<span class="t" style="left:853.2px;top:807.0px;font-size:12.9px;color:#68718a;letter-spacing:-0.40px;">0:10</span>
<span class="t" style="left:1019.6px;top:807.0px;font-size:12.9px;color:#68718a;letter-spacing:-0.40px;">0:12</span>
<svg style="left:49px;top:750px" width="20" height="20" viewBox="0 0 24 24" fill="none" stroke="#a3adbf" stroke-width="2" stroke-linecap="round" stroke-linejoin="round"><circle cx="11" cy="11" r="8"/><line x1="21" y1="21" x2="16.65" y2="16.65"/><line x1="11" y1="8" x2="11" y2="14"/><line x1="8" y1="11" x2="14" y2="11"/></svg>
<svg style="left:89px;top:750px" width="20" height="20" viewBox="0 0 24 24" fill="none" stroke="#a3adbf" stroke-width="2" stroke-linecap="round" stroke-linejoin="round"><circle cx="6" cy="6" r="3"/><path d="M8.12 8.12 12 12"/><path d="M20 4 8.12 15.88"/><circle cx="6" cy="18" r="3"/><path d="M14.8 14.8 20 20"/></svg>
<svg style="left:128.6px;top:750px" width="20" height="20" viewBox="0 0 24 24" fill="none" stroke="#a3adbf" stroke-width="2" stroke-linecap="round" stroke-linejoin="round"><path d="M21 15a2 2 0 0 1-2 2H7l-4 4V5a2 2 0 0 1 2-2h14a2 2 0 0 1 2 2z"/></svg>
<span class="t" style="left:176.8px;top:752.7px;font-size:14.9px;color:#a3adbf;letter-spacing:-0.13px;">16:9</span>
<svg style="left:211.2px;top:750.4px" width="20" height="20" viewBox="0 0 24 24" fill="none" stroke="#a3adbf" stroke-width="1.8" stroke-linecap="round" stroke-linejoin="round"><path d="m6 9 6 6 6-6"/></svg>
<div style="left:754.3px;top:748.2px;width:131.5px;height:24.3px;background:#151517;border:1px solid rgba(255,255,255,.11);border-radius:5px"></div>
<span class="t" style="left:762.7px;top:753.8px;font-size:13.7px;color:#3fae7c;letter-spacing:0.01px;">Shift + Ctrl + Scroll</span>
<span class="t" style="left:893.8px;top:754.5px;font-size:12.9px;color:#667085;letter-spacing:-0.82px;">Pan</span>
<div style="left:935.4px;top:748.2px;width:86.2px;height:24.3px;background:#151517;border:1px solid rgba(255,255,255,.11);border-radius:5px"></div>
<span class="t" style="left:943.8px;top:753.8px;font-size:13.7px;color:#3fae7c;letter-spacing:-0.08px;">Ctrl + Scroll</span>
<span class="t" style="left:1030.2px;top:753.8px;font-size:13.7px;color:#667085;">Zoom</span>
<div style="left:319px;top:795px;width:16px;height:169px;background:linear-gradient(90deg,transparent,rgba(52,178,123,.065) 45%,rgba(52,178,123,.065) 55%,transparent)"></div>
<div style="left:325.8px;top:795px;width:2.4px;height:169px;background:#3dbb86"></div>
<svg style="left:315px;top:786px" width="24" height="20" viewBox="315 786 24 20"><path d="M320.8 789H332.2Q335.3 790 335.3 793.4Q335.2 795.6 333.6 797.2L329.2 801.4Q327 803 324.8 801.4L320.4 797.2Q318.8 795.6 317.9 793.4Q317.7 790 320.8 789Z" fill="#34b27b" stroke="#56c596" stroke-width=".6"/></svg>
<!-- settings panel -->
<div style="left:1106px;top:143px;width:346px;height:822px;background:#09090b;border:1px solid rgba(255,255,255,.06);border-radius:19px 0 0 19px"></div>
<div style="left:1431px;top:144px;width:21px;height:820px;background:#f1f1f1"></div>
<div style="left:1433px;top:165px;width:17px;height:763px;background:#c1c1c1"></div>
<svg style="left:1431px;top:144px" width="21" height="21" viewBox="0 0 21 21"><path d="M5.900 14L10.500 9L15.100 14Z" fill="#a3a3a3"/></svg>
<svg style="left:1431px;top:943px" width="21" height="21" viewBox="0 0 21 21"><path d="M5.8 6.8L10.6 11.6L15.4 6.8Z" fill="#505050"/></svg>
<span class="t" style="left:1127.2px;top:166.3px;font-size:19px;color:#f1f5f9;letter-spacing:-0.24px;-webkit-text-stroke:.12px #f1f5f9;">Zoom Level</span>
<svg style="left:1391px;top:167px" width="20" height="20" viewBox="0 0 24 24" fill="none" stroke="#78849a" stroke-width="1.9" stroke-linecap="round" stroke-linejoin="round"><circle cx="12" cy="12" r="10"/><path d="M9.09 9a3 3 0 0 1 5.83 1c0 2-3 3-3 3"/><path d="M12 17h.01"/></svg>
<div style="left:1127.2px;top:209px;width:38.8px;height:57px;background:#0f0f11;border:1px solid rgba(255,255,255,.035);border-radius:15px"></div>
<div style="left:1176.25px;top:209px;width:38.8px;height:57px;background:#0f0f11;border:1px solid rgba(255,255,255,.035);border-radius:15px"></div>
<div style="left:1225.3px;top:209px;width:38.8px;height:57px;background:#0f0f11;border:1px solid rgba(255,255,255,.035);border-radius:15px"></div>
<div style="left:1274.35px;top:209px;width:38.8px;height:57px;background:#0f0f11;border:1px solid rgba(255,255,255,.035);border-radius:15px"></div>
<div style="left:1323.4px;top:209px;width:38.8px;height:57px;background:#0f0f11;border:1px solid rgba(255,255,255,.035);border-radius:15px"></div>
<div style="left:1372.45px;top:209px;width:38.8px;height:57px;background:#0f0f11;border:1px solid rgba(255,255,255,.035);border-radius:15px"></div>
<span class="t" style="left:1123.1px;top:228.7px;font-size:18.3px;color:#4b5162;font-weight:700;letter-spacing:0.16px;">1.25×</span>
<span class="t" style="left:1177.9px;top:228.7px;font-size:18.3px;color:#4b5162;font-weight:700;letter-spacing:0.04px;">1.5×</span>
<span class="t" style="left:1226.7px;top:228.7px;font-size:18.3px;color:#4b5162;font-weight:700;letter-spacing:0.07px;">1.8×</span>
<span class="t" style="left:1275.1px;top:228.7px;font-size:18.3px;color:#4b5162;font-weight:700;letter-spacing:0.20px;">2.2×</span>
<span class="t" style="left:1323.7px;top:228.7px;font-size:18.3px;color:#4b5162;font-weight:700;letter-spacing:0.30px;">3.5×</span>
<span class="t" style="left:1380.4px;top:228.7px;font-size:18.3px;color:#4b5162;font-weight:700;letter-spacing:1.16px;">5×</span>
<span class="t" style="left:1130.2px;top:283.2px;font-size:15px;color:#6a7a93;letter-spacing:0.62px;">Select a zoom region in the timeline to</span>
<span class="t" style="left:1222.0px;top:303.2px;font-size:15px;color:#6a7a93;letter-spacing:0.72px;">adjust depth.</span>
<div style="left:1127px;top:381px;width:135px;height:71.5px;background:#161618;border:1px solid rgba(255,255,255,.05);border-radius:15px"></div>
<div style="left:1277px;top:381px;width:134px;height:71.5px;background:#161618;border:1px solid rgba(255,255,255,.05);border-radius:15px"></div>
<span class="t" style="left:1143.5px;top:399.2px;font-size:15.2px;color:#e2e8f0;letter-spacing:1.38px;-webkit-text-stroke:.12px #e2e8f0;">Motion</span>
<span class="t" style="left:1143.3px;top:418.9px;font-size:15.2px;color:#e2e8f0;letter-spacing:0.39px;-webkit-text-stroke:.12px #e2e8f0;">Blur</span>
<span class="t" style="left:1293.0px;top:408.8px;font-size:15.2px;color:#e2e8f0;letter-spacing:0.39px;-webkit-text-stroke:.12px #e2e8f0;">Blur</span>
<div style="left:1201px;top:404.8px;width:45.2px;height:25.2px;background:#34b27b;border-radius:13px"></div>
<div style="left:1223.6px;top:407.3px;width:20.2px;height:20.2px;background:#fafafa;border-radius:50%;box-shadow:0 1px 3px rgba(0,0,0,.3)"></div>
<div style="left:1350px;top:404.8px;width:45.2px;height:25.2px;background:#34b27b;border-radius:13px"></div>
<div style="left:1372.6px;top:407.3px;width:20.2px;height:20.2px;background:#fafafa;border-radius:50%;box-shadow:0 1px 3px rgba(0,0,0,.3)"></div>
<div style="left:1127px;top:483.3px;width:135.8px;height:61.5px;background:#161618;border:1px solid rgba(255,255,255,.05);border-radius:15px"></div>
<span class="t" style="left:1140.8px;top:499.2px;font-size:15.2px;color:#e2e8f0;letter-spacing:0.50px;-webkit-text-stroke:.12px #e2e8f0;">Shadow</span>
<span class="t" style="left:1229.4px;top:500.8px;font-size:12px;color:#9aa5b8;font-family:'Liberation Mono', monospace;letter-spacing:-0.40px;">71%</span>
<div style="left:1140.8px;top:524.1px;width:108.8px;height:7.8px;background:#2a2a2d;border-radius:4px"></div>
<div style="left:1140.8px;top:524.1px;width:73.9px;height:7.8px;background:#34b27b;border-radius:4px"></div>
<div style="left:1204.7px;top:518px;width:20px;height:20px;background:#34b27b;border-radius:50%;box-shadow:0 1px 3px rgba(0,0,0,.4)"></div>
<div style="left:1275.2px;top:483.3px;width:135.8px;height:61.5px;background:#161618;border:1px solid rgba(255,255,255,.05);border-radius:15px"></div>
<span class="t" style="left:1289.0px;top:499.2px;font-size:15.2px;color:#e2e8f0;letter-spacing:0.12px;-webkit-text-stroke:.12px #e2e8f0;">Roundness</span>
<span class="t" style="left:1370.6px;top:500.8px;font-size:12px;color:#9aa5b8;font-family:'Liberation Mono', monospace;letter-spacing:-0.57px;">11px</span>
<div style="left:1289px;top:524.1px;width:108.8px;height:7.8px;background:#2a2a2d;border-radius:4px"></div>
<div style="left:1289px;top:524.1px;width:71.6px;height:7.8px;background:#34b27b;border-radius:4px"></div>
<div style="left:1350.6px;top:518px;width:20px;height:20px;background:#34b27b;border-radius:50%;box-shadow:0 1px 3px rgba(0,0,0,.4)"></div>
<div style="left:1127px;top:558.3px;width:135.8px;height:61.5px;background:#161618;border:1px solid rgba(255,255,255,.05);border-radius:15px"></div>
<span class="t" style="left:1140.8px;top:572.9px;font-size:15.2px;color:#e2e8f0;letter-spacing:0.49px;-webkit-text-stroke:.12px #e2e8f0;">Padding</span>
<span class="t" style="left:1229.4px;top:574.5px;font-size:12px;color:#9aa5b8;font-family:'Liberation Mono', monospace;letter-spacing:-0.40px;">50%</span>
<div style="left:1140.8px;top:598.3px;width:108.8px;height:7.8px;background:#2a2a2d;border-radius:4px"></div>
<div style="left:1140.8px;top:598.3px;width:54.4px;height:7.8px;background:#34b27b;border-radius:4px"></div>
<div style="left:1185.2px;top:592.2px;width:20px;height:20px;background:#34b27b;border-radius:50%;box-shadow:0 1px 3px rgba(0,0,0,.4)"></div>
<div style="left:1127px;top:640px;width:284px;height:45px;background:#161618;border:1px solid rgba(255,255,255,.1);border-radius:10px"></div>
<svg style="left:1207.2px;top:652.4px" width="20" height="20" viewBox="0 0 24 24" fill="none" stroke="#e2e8f0" stroke-width="2" stroke-linecap="round" stroke-linejoin="round"><path d="M6 2v14a2 2 0 0 0 2 2h14"/><path d="M18 22V8a2 2 0 0 0-2-2H2"/></svg>
<span class="t" style="left:1237.4px;top:653.3px;font-size:18.2px;color:#e2e8f0;letter-spacing:0.37px;-webkit-text-stroke:.12px #e2e8f0;">Crop Video</span>
<div style="left:1127px;top:705px;width:284px;height:56px;background:#131315;border:1px solid rgba(255,255,255,.05);border-radius:15px"></div>
<div style="left:1128px;top:725px;width:282px;height:35px;background:rgba(255,255,255,.018);border-top:1px solid rgba(255,255,255,.045);border-radius:0 0 14px 14px"></div>
<div style="left:1132.7px;top:710.8px;width:91.6px;height:45.2px;background:#34b27b;border-radius:11px"></div>
<span class="t" style="left:1152.7px;top:723.8px;font-size:18.4px;color:#ffffff;letter-spacing:0.22px;-webkit-text-stroke:.4px #fff;">Image</span>
<span class="t" style="left:1246.6px;top:723.8px;font-size:18.4px;color:#8f9bb0;letter-spacing:0.24px;">Color</span>
<span class="t" style="left:1323.6px;top:723.8px;font-size:18.4px;color:#8f9bb0;letter-spacing:0.28px;">Gradient</span>
<span class="t" style="left:1128.2px;top:748.7px;font-size:14.8px;color:#8591a8;letter-spacing:0.66px;">Export Quality</span>
<div style="left:1127px;top:776.3px;width:284px;height:51.6px;background:#131315;border:1px solid rgba(255,255,255,.05);border-radius:15px"></div>
<div style="left:1132.7px;top:782.1px;width:91.6px;height:39.8px;background:#ffffff;border-radius:10px"></div>
<span class="t" style="left:1164.5px;top:794.1px;font-size:15.2px;color:#0f172a;letter-spacing:0.26px;">Low</span>
<span class="t" style="left:1239.9px;top:794.1px;font-size:15.2px;color:#8f9bb0;letter-spacing:0.95px;">Medium</span>
<span class="t" style="left:1343.0px;top:794.1px;font-size:15.2px;color:#8f9bb0;letter-spacing:0.82px;">High</span>
<div style="left:1127px;top:840px;width:284px;height:60px;background:#34b27b;border-radius:14px;box-shadow:0 12.5px 19px -4px rgba(52,178,123,.22),0 5px 8px -5px rgba(52,178,123,.22)"></div>
<svg style="left:1177.6px;top:861px" width="20" height="20" viewBox="0 0 24 24" fill="none" stroke="#ffffff" stroke-width="2" stroke-linecap="round" stroke-linejoin="round"><path d="M21 15v4a2 2 0 0 1-2 2H5a2 2 0 0 1-2-2v-4"/><polyline points="7 10 12 15 17 10"/><line x1="12" y1="15" x2="12" y2="3"/></svg>
<span class="t" style="left:1213.6px;top:859.5px;font-size:22.2px;color:#ffffff;font-weight:700;letter-spacing:0.96px;">Export Video</span>
<svg style="left:1135.6px;top:932.7px" width="15" height="15" viewBox="0 0 24 24" fill="none" stroke="#34b27b" stroke-width="2" stroke-linecap="round" stroke-linejoin="round"><path d="m8 2 1.88 1.88"/><path d="M14.12 3.88 16 2"/><path d="M9 7.13v-1a3.003 3.003 0 1 1 6 0v1"/><path d="M12 20c-3.3 0-6-2.700-6-6v-3a4 4 0 0 1 4-4h4a4 4 0 0 1 4 4v3c0 3.300-2.700 6-6 6"/><path d="M12 20v-9"/><path d="M6.530 9C4.600 8.800 3 7.100 3 5"/><path d="M6 13H2"/><path d="M3 21c0-2.100 1.700-3.900 3.800-4"/><path d="M20.970 5c0 2.100-1.600 3.800-3.500 4"/><path d="M22 13h-4"/><path d="M17.200 17c2.100.1 3.800 1.900 3.800 4"/></svg>
<span class="t" style="left:1161.9px;top:932.4px;font-size:15.2px;color:#e2e8f0;letter-spacing:0.32px;-webkit-text-stroke:.12px #e2e8f0;">Report a Bug</span>
<svg style="left:1277px;top:932.7px" width="15" height="15" viewBox="0 0 24 24" fill="none" stroke="#facc15" stroke-width="2" stroke-linecap="round" stroke-linejoin="round"><polygon points="12 2 15.09 8.26 22 9.27 17 14.14 18.18 21.02 12 17.77 5.82 21.02 7 14.14 2 9.27 8.91 8.26 12 2"/></svg>
<span class="t" style="left:1301.7px;top:932.4px;font-size:15.2px;color:#e2e8f0;letter-spacing:0.45px;-webkit-text-stroke:.12px #e2e8f0;">Star on GitHub</span>
</body></html>
